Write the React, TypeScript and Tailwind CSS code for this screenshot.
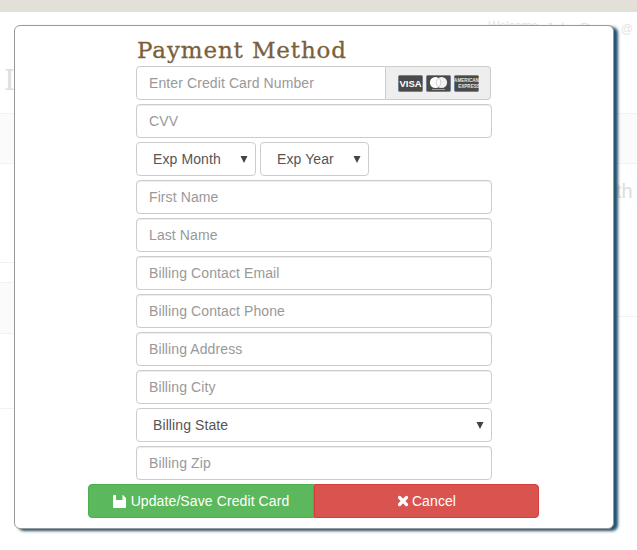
const sans = "font-['Liberation_Sans',Arial,sans-serif]";

function Field({ placeholder }: { placeholder: string }) {
  return (
    <input
      placeholder={placeholder}
      className="block h-[34px] w-full rounded border border-[#ccc] bg-white px-3 text-sm tracking-[0.1px] text-[#555] outline-none shadow-[inset_0_1px_1px_rgba(0,0,0,0.075)] placeholder:text-[#999]"
    />
  );
}

function Picker({ label, className }: { label: string; className: string }) {
  return (
    <div className={`relative h-[34px] ${className}`}>
      <select className="h-full w-full appearance-none rounded border border-[#ccc] bg-white pl-4 text-sm tracking-[0.1px] text-[#555] outline-none">
        <option>{label}</option>
      </select>
      <svg viewBox="0 0 8 8" className="absolute right-[8px] top-[13px] h-2 w-2 fill-[#444]">
        <path d="M0.5 1h7L4 8z" />
      </svg>
    </div>
  );
}

function CardIcons() {
  return (
    <svg width="81" height="17" viewBox="0 0 81 17">
      <rect x="0.5" y="0.5" width="24" height="16" rx="1" fill="#4a4a4a" stroke="#5b6f86" strokeWidth="0.6" />
      <text x="12.5" y="12" textAnchor="middle" fontFamily="Liberation Sans" fontWeight="700" fontSize="9.5" fill="#fff">
        VISA
      </text>
      <rect x="28.5" y="0.5" width="24" height="16" rx="1" fill="#4a4a4a" stroke="#5b6f86" strokeWidth="0.6" />
      <circle cx="37.5" cy="7.5" r="5.6" fill="#fff" />
      <circle cx="43.5" cy="7.5" r="5.6" fill="#f1f1f1" />
      <path d="M40.5 3a5.6 5.6 0 0 1 0 9a5.6 5.6 0 0 1 0-9z" fill="#fff" stroke="#aaa" strokeWidth="0.5" />
      <rect x="34" y="14" width="13" height="1" fill="#999" />
      <rect x="56.5" y="0.5" width="24" height="16" rx="1" fill="#4a4a4a" stroke="#5b6f86" strokeWidth="0.6" />
      <text x="68.5" y="7" textAnchor="middle" fontFamily="Liberation Sans" fontWeight="700" fontSize="4.6" fill="#e4e4e4">
        AMERICAN
      </text>
      <text x="71" y="12.5" textAnchor="middle" fontFamily="Liberation Sans" fontWeight="700" fontSize="4.6" fill="#e4e4e4">
        EXPRESS
      </text>
    </svg>
  );
}

function SaveIcon() {
  return (
    <svg viewBox="0 0 13 13" className="h-[13px] w-[13px] fill-white">
      <path d="M0 1a1 1 0 0 1 1-1h2v5h6.5V0h.5l3 3v9a1 1 0 0 1-1 1H1a1 1 0 0 1-1-1z" />
    </svg>
  );
}

function CancelIcon() {
  return (
    <svg viewBox="0 0 12 12" className="h-3 w-3 stroke-white" strokeWidth="3.2" strokeLinecap="round">
      <path d="M2.5 2.5l7 7M9.5 2.5l-7 7" />
    </svg>
  );
}

export default function App() {
  return (
    <div className={`relative h-[550px] w-[637px] overflow-hidden bg-white ${sans}`}>
      <div className="h-3 bg-[#e3dfd9]" />

      {/* page behind the modal */}
      <div className="flex h-[30px] justify-end pt-[6px] pr-[4px] leading-5 text-[#e4e4e4]">
        <span className="mr-[8px] text-xs">Welcome</span>
        <span className="mr-[7px] text-sm">John Dopp</span>
        <span className="mt-[3px] text-xs">@</span>
      </div>
      <div className="flex justify-between">
        <div className="w-[14px]">
          <div className="mt-[23px] h-[48px] pl-[4px] font-['DejaVu_Serif',serif] text-[28px] leading-[32px] text-[#ddd]">
            I
          </div>
          <div className="h-[51px] border-y border-[#f2f2f2] bg-[#fbfbfb]" />
          <div className="mt-[98px] h-[20px] border-t border-[#f2f2f2]" />
          <div className="h-[52px] border-y border-[#f2f2f2] bg-[#fbfbfb]" />
          <div className="h-[75px] border-b border-[#f2f2f2]" />
        </div>
        <div className="w-[24px]">
          <div className="mt-[71px] h-[51px] border-y border-[#f2f2f2] bg-[#fbfbfb]" />
          <div className="h-[153px] border-b border-[#f2f2f2] pt-[17px] pl-[3px] text-xl leading-5 text-[#ddd]">th</div>
        </div>
      </div>

      {/* modal */}
      <div className="absolute left-[14px] top-[25px] flex h-[504px] w-[600px] flex-col items-center rounded-md border border-[#999] bg-white shadow-[4px_2px_3px_#24536f]">
        <div className="w-[356px]">
          <h2 className="h-10 pt-[9px] pl-[1px] font-['DejaVu_Serif',serif] text-[23px] leading-[30px] tracking-[0.87px] text-[#7b5f3c] [-webkit-text-stroke:0.3px_#7b5f3c]">
            Payment Method
          </h2>
          <div className="flex flex-col gap-1">
            <div className="flex h-[34px] w-[355px]">
              <input
                placeholder="Enter Credit Card Number"
                className="h-full min-w-0 flex-1 rounded-l border border-[#ccc] bg-white px-3 text-sm tracking-[0.1px] outline-none placeholder:text-[#999]"
              />
              <div className="flex h-full w-[105px] items-center rounded-r border border-l-0 border-[#ccc] bg-[#eee] pl-3">
                <CardIcons />
              </div>
            </div>
            <Field placeholder="CVV" />
            <div className="flex gap-1">
              <Picker label="Exp Month" className="w-[120px]" />
              <Picker label="Exp Year" className="w-[109px]" />
            </div>
            <Field placeholder="First Name" />
            <Field placeholder="Last Name" />
            <Field placeholder="Billing Contact Email" />
            <Field placeholder="Billing Contact Phone" />
            <Field placeholder="Billing Address" />
            <Field placeholder="Billing City" />
            <Picker label="Billing State" className="w-full" />
            <Field placeholder="Billing Zip" />
          </div>
        </div>
        <div className="mt-1 ml-[-1px] flex h-[34px] w-[451px] text-sm tracking-[0.1px] text-white">
          <button className="flex w-[226px] items-center justify-center gap-[5px] rounded-l border border-[#4cae4c] bg-[#5cb85c]">
            <SaveIcon />
            Update/Save Credit Card
          </button>
          <button className="flex w-[225px] items-center justify-center gap-[3px] rounded-r border border-[#d43f3a] bg-[#d9534f]">
            <CancelIcon />
            Cancel
          </button>
        </div>
      </div>
    </div>
  );
}
